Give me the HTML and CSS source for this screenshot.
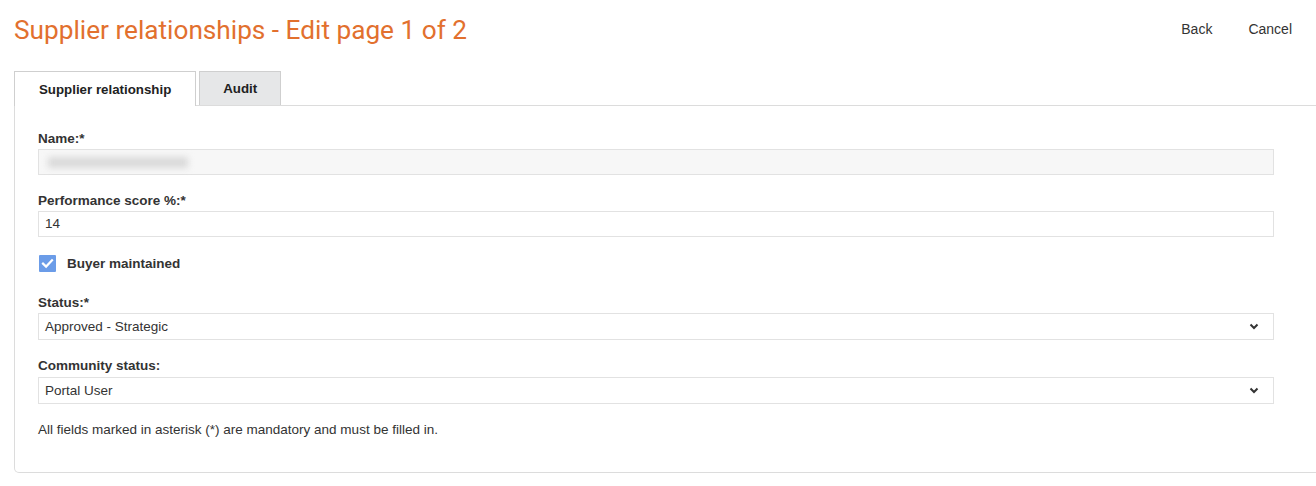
FILE: index.html
```html
<!DOCTYPE html>
<html lang="en">
<head>
<meta charset="utf-8">
<title>Supplier relationships - Edit</title>
<link rel="stylesheet" href="styles.css">
</head>
<body>
<header class="header">
  <h1 class="title">Supplier relationships - Edit page 1 of 2</h1>
  <nav class="actions">
    <a class="action" href="#">Back</a>
    <a class="action" href="#">Cancel</a>
  </nav>
</header>
<main class="content">
  <div class="tabs">
    <div class="tab tab-active">Supplier relationship</div>
    <div class="tab">Audit</div>
  </div>
  <section class="panel">
    <div class="form">
      <div class="field">
        <label class="label">Name:*</label>
        <div class="input input-disabled"><span class="blur"></span></div>
      </div>
      <div class="field">
        <label class="label">Performance score %:*</label>
        <div class="input">14</div>
      </div>
      <div class="check-row">
        <span class="checkbox">
          <svg width="17" height="17" viewBox="0 0 17 17"><path d="M4 8.6 L7.1 11.6 L13 5.4" fill="none" stroke="#fff" stroke-width="2.2" stroke-linecap="square"/></svg>
        </span>
        <span class="check-label">Buyer maintained</span>
      </div>
      <div class="field">
        <label class="label">Status:*</label>
        <div class="input select"><span>Approved - Strategic</span>
          <svg class="chev" width="10" height="7" viewBox="0 0 10 7"><path d="M1.5 1.5 L5 5 L8.5 1.5" fill="none" stroke="#333" stroke-width="2"/></svg>
        </div>
      </div>
      <div class="field field-tight">
        <label class="label">Community status:</label>
        <div class="input select"><span>Portal User</span>
          <svg class="chev" width="10" height="7" viewBox="0 0 10 7"><path d="M1.5 1.5 L5 5 L8.5 1.5" fill="none" stroke="#333" stroke-width="2"/></svg>
        </div>
      </div>
      <p class="note">All fields marked in asterisk (*) are mandatory and must be filled in.</p>
    </div>
  </section>
</main>
</body>
</html>
```
FILE: styles.css
```css
html, body {
  margin: 0;
  padding: 0;
  background: #fff;
  overflow: hidden;
}
body {
  font-family: "Liberation Sans", Arial, sans-serif;
  color: #333;
}
.header {
  display: flex;
  align-items: flex-start;
  justify-content: space-between;
  padding: 15px 6px 0 14px;
  height: 56px;
}
.title {
  margin: 0;
  font-family: Roboto, "Liberation Sans", sans-serif;
  font-weight: 400;
  font-size: 26.2px;
  line-height: 30px;
  color: #e2702e;
}
.actions {
  display: flex;
  padding-top: 5px;
}
.action {
  font-size: 14px;
  line-height: 18px;
  color: #333;
  text-decoration: none;
  padding: 0 18px;
}
.content {
  padding-left: 14px;
  margin-right: -30px;
}
.tabs {
  display: flex;
  gap: 3px;
  border-bottom: 1px solid #dcdcdc;
  height: 34px;
}
.tab {
  box-sizing: border-box;
  height: 34px;
  padding: 0 23px;
  display: flex;
  align-items: center;
  font-size: 13.3px;
  font-weight: bold;
  color: #222;
  background: #e6e7e8;
  border: 1px solid #cfcfcf;
  border-bottom: none;
}
.tab-active {
  background: #fff;
  height: 35px;
  padding: 0 24px;
  margin-bottom: -1px;
  position: relative;
}
.panel {
  border: 1px solid #dcdcdc;
  border-top: none;
  border-radius: 0 0 5px 5px;
  padding: 24px 0 33px 23px;
}
.form {
  width: 1236px;
}
.field {
  margin-bottom: 17px;
}
.label {
  display: block;
  font-size: 13.5px;
  font-weight: bold;
  line-height: 18px;
  color: #333;
  margin-bottom: 1px;
}
.field-tight .label {
  margin-bottom: 2px;
}
.input {
  box-sizing: border-box;
  height: 26px;
  border: 1px solid #e2e2e2;
  background: #fff;
  padding: 0 6px;
  font-size: 13.5px;
  line-height: 24px;
  color: #333;
  display: flex;
  align-items: center;
}
.input-disabled {
  background: #f7f7f7;
}
.blur {
  display: block;
  width: 140px;
  height: 11px;
  margin-left: 3px;
  background: #dadada;
  filter: blur(3px);
}
.select {
  height: 27px;
  justify-content: space-between;
  padding-right: 14px;
}
.chev {
  display: block;
}
.check-row {
  display: flex;
  align-items: center;
  height: 18px;
  margin-bottom: 22px;
}
.checkbox {
  box-sizing: border-box;
  width: 17px;
  height: 17px;
  margin-left: 1px;
  background: #6b9ce8;
  border-radius: 1px;
  display: block;
}
.checkbox svg {
  display: block;
}
.check-label {
  margin-left: 11px;
  font-size: 13.5px;
  font-weight: bold;
  color: #333;
}
.note {
  margin: 1px 0 0;
  font-size: 13.5px;
  line-height: 18px;
  color: #333;
}
```
